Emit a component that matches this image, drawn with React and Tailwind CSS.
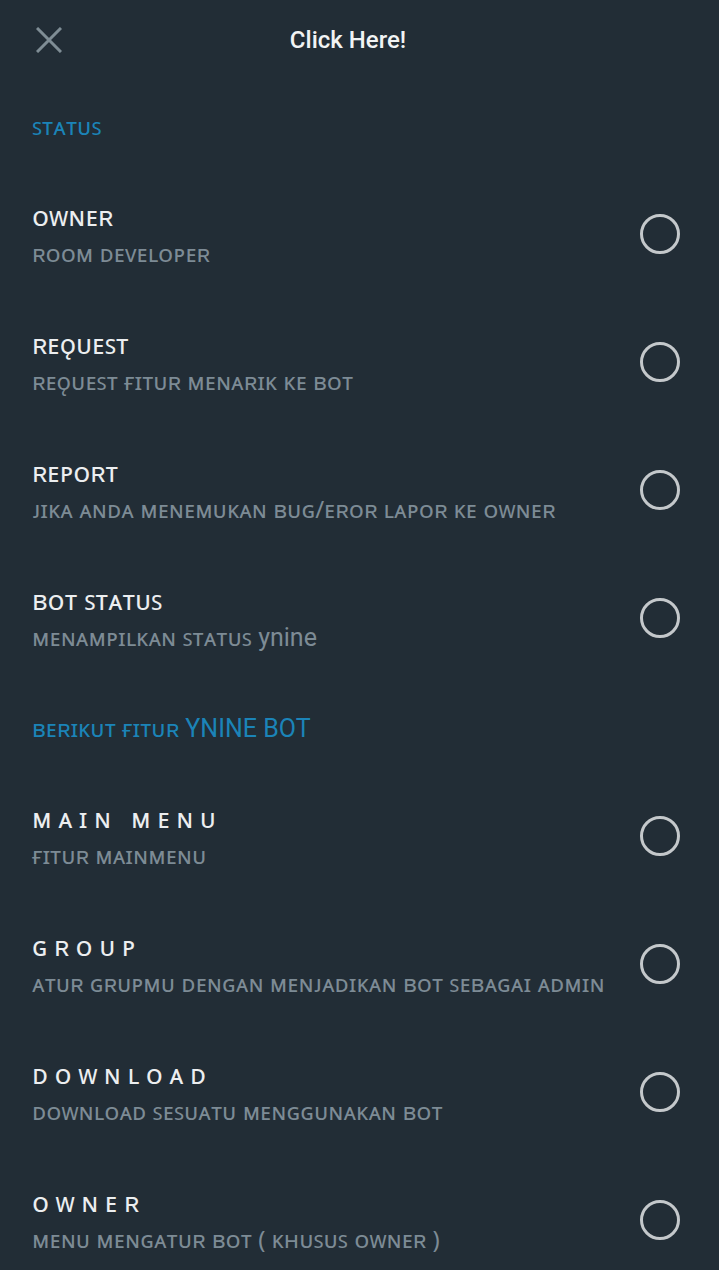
import React from "react";

const Radio = () => (
  <div className="w-[40px] h-[40px] rounded-full border-[3px] border-[#c4c8cb] shrink-0" />
);

const Row = ({ title, sub, spaced }) => (
  <div className="flex items-center h-[128px] pl-[32px] pr-[39px]">
    <div className="flex-1 flex flex-col">
      <div
        className={
          "text-[#eceef0] text-[27px] leading-[32px] whitespace-nowrap font-['Noto_Sans','DejaVu_Sans',sans-serif] " +
          (spaced ? "tracking-[0.24em]" : "tracking-normal")
        }
      >
        {title}
      </div>
      <div className="text-[#7d8b95] text-[24px] leading-[30px] mt-[6px] whitespace-nowrap font-['Noto_Sans','DejaVu_Sans',sans-serif]">
        {sub}
      </div>
    </div>
    <Radio />
  </div>
);

const Section = ({ children }) => (
  <div className="h-[90px] pl-[32px] pt-[32px] text-[#1b84b8] text-[24px] leading-[28px] whitespace-nowrap font-['Noto_Sans','DejaVu_Sans',sans-serif]">
    {children}
  </div>
);

export default function App() {
  return (
    <div className="w-[719px] h-[1270px] overflow-hidden bg-[#222d36]">
      <div className="flex items-center h-[80px]">
        <div className="w-[96px] h-[80px] flex items-center pl-[36px]">
          <svg width="26" height="26" viewBox="0 0 26 26">
            <path d="M1 1 L25 25 M25 1 L1 25" stroke="#7f8d95" strokeWidth="3" fill="none" />
          </svg>
        </div>
        <div className="flex-1 text-center pr-[119px] text-[#f1f3f4] text-[24px] font-medium font-['Roboto',sans-serif]">
          Click Here!
        </div>
      </div>

      <Section>ꜱᴛᴀᴛᴜꜱ</Section>
      <Row title="ᴏᴡɴᴇʀ" sub="ʀᴏᴏᴍ ᴅᴇᴠᴇʟᴏᴘᴇʀ" />
      <Row title="ʀᴇǫᴜᴇꜱᴛ" sub="ʀᴇǫᴜᴇꜱᴛ ғɪᴛᴜʀ ᴍᴇɴᴀʀɪᴋ ᴋᴇ ʙᴏᴛ" />
      <Row title="ʀᴇᴘᴏʀᴛ" sub="ᴊɪᴋᴀ ᴀɴᴅᴀ ᴍᴇɴᴇᴍᴜᴋᴀɴ ʙᴜɢ/ᴇʀᴏʀ ʟᴀᴘᴏʀ ᴋᴇ ᴏᴡɴᴇʀ" />
      <Row
        title="ʙᴏᴛ ꜱᴛᴀᴛᴜꜱ"
        sub={
          <>
            ᴍᴇɴᴀᴍᴘɪʟᴋᴀɴ ꜱᴛᴀᴛᴜꜱ <span className="font-['Roboto',sans-serif] text-[25px]">ynine</span>
          </>
        }
      />

      <Section>
        ʙᴇʀɪᴋᴜᴛ ғɪᴛᴜʀ <span className="font-['Roboto',sans-serif] text-[25px]">YNINE BOT</span>
      </Section>
      <Row spaced title="ᴍᴀɪɴ ᴍᴇɴᴜ" sub="ғɪᴛᴜʀ ᴍᴀɪɴᴍᴇɴᴜ" />
      <Row spaced title="ɢʀᴏᴜᴘ" sub="ᴀᴛᴜʀ ɢʀᴜᴘᴍᴜ ᴅᴇɴɢᴀɴ ᴍᴇɴᴊᴀᴅɪᴋᴀɴ ʙᴏᴛ ꜱᴇʙᴀɢᴀɪ ᴀᴅᴍɪɴ" />
      <Row spaced title="ᴅᴏᴡɴʟᴏᴀᴅ" sub="ᴅᴏᴡɴʟᴏᴀᴅ ꜱᴇꜱᴜᴀᴛᴜ ᴍᴇɴɢɢᴜɴᴀᴋᴀɴ ʙᴏᴛ" />
      <Row spaced title="ᴏᴡɴᴇʀ" sub="ᴍᴇɴᴜ ᴍᴇɴɢᴀᴛᴜʀ ʙᴏᴛ ( ᴋʜᴜꜱᴜꜱ ᴏᴡɴᴇʀ )" />
    </div>
  );
}
